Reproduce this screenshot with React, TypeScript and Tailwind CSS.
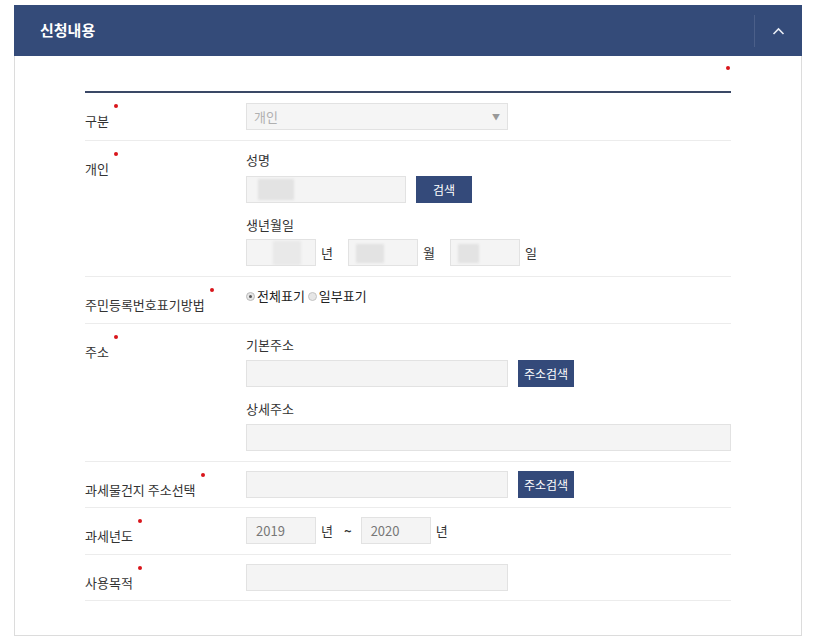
import React from 'react'

const font = { fontFamily: '"Noto Sans CJK KR", "Noto Sans", sans-serif' }

function Req({ children }: { children: React.ReactNode }) {
  return (
    <span className="relative inline-block text-[13px] leading-[20px] text-[#333]">
      {children}
      <span className="absolute -right-[9px] -top-[7px] h-[4px] w-[4px] rounded-full bg-[#d9151b]" />
    </span>
  )
}

function Input({ w, value, children }: { w: string; value?: string; children?: React.ReactNode }) {
  return (
    <div className={`relative h-[27px] ${w} overflow-hidden border border-[#e2e2e2] bg-[#f4f4f4] px-[9px] text-[13px] leading-[25px] text-[#777]`}>
      {value}
      {children}
    </div>
  )
}

function Btn({ children }: { children: React.ReactNode }) {
  return (
    <button className="ml-[10px] h-[27px] w-[56px] bg-[#344a7a] text-[12px] text-white">
      {children}
    </button>
  )
}

function Row({ label, children, className }: { label: string; children: React.ReactNode; className: string }) {
  return (
    <div className="flex border-b border-[#ececec]">
      <div className="w-[161px] shrink-0 pt-[14px]">
        <Req>{label}</Req>
      </div>
      <div className={`flex-1 ${className}`}>{children}</div>
    </div>
  )
}

function Sub({ children }: { children: React.ReactNode }) {
  return <div className="text-[13px] leading-[20px] text-[#333]">{children}</div>
}

function Unit({ children }: { children: React.ReactNode }) {
  return <span className="ml-[5px] text-[13px] leading-[20px] text-[#333]">{children}</span>
}

export default function App() {
  return (
    <div className="min-h-[644px] bg-white pl-[14px] pt-[5px]" style={font}>
      <div className="w-[788px]">
        <div className="flex h-[51px] items-center bg-[#344b79]">
          <h2 className="flex-1 pl-[26px] text-[15px] font-bold text-white">신청내용</h2>
          <div className="flex h-[32px] w-[48px] items-center justify-center border-l border-[#4b5f89]">
            <svg width="13" height="8" viewBox="0 0 13 8" fill="none">
              <polyline points="1.5,7 6.5,2 11.5,7" stroke="#e8ecf4" strokeWidth="1.6" />
            </svg>
          </div>
        </div>
        <div className="border border-t-0 border-[#dcdcdc] px-[70px] pb-[34px]">
          <div className="flex h-[35px] justify-end pr-[1px] pt-[10px]">
            <span className="h-[4px] w-[4px] rounded-full bg-[#d9151b]" />
          </div>
          <div className="h-[2px] bg-[#3a4866]" />

          <Row label="구분" className="pb-[10px] pt-[10px]">
            <div className="relative h-[27px] w-[262px] border border-[#e2e2e2] bg-[#f5f5f5] px-[7px] text-[13px] leading-[25px] text-[#b0b0b0]">
              개인
              <span className="absolute right-[7px] top-0 text-[8px] text-[#999]">▼</span>
            </div>
          </Row>

          <Row label="개인" className="pb-[10px] pt-[9px]">
            <Sub>성명</Sub>
            <div className="mt-[6px] flex">
              <Input w="w-[160px]">
                <div className="absolute left-[11px] top-[2px] h-[21px] w-[36px] bg-[#e3e3e3] blur-[1px]" />
              </Input>
              <Btn>검색</Btn>
            </div>
            <div className="mt-[12px]">
              <Sub>생년월일</Sub>
            </div>
            <div className="mt-[4px] flex items-center">
              <Input w="w-[70px]">
                <div className="absolute left-[26px] top-[1px] h-[24px] w-[28px] bg-[#e9e9e9] blur-[1px]" />
              </Input>
              <Unit>년</Unit>
              <div className="ml-[15px]">
                <Input w="w-[70px]">
                  <div className="absolute left-[7px] top-[4px] h-[19px] w-[28px] bg-[#e3e3e3] blur-[1px]" />
                </Input>
              </div>
              <Unit>월</Unit>
              <div className="ml-[15px]">
                <Input w="w-[70px]">
                  <div className="absolute left-[7px] top-[4px] h-[19px] w-[21px] bg-[#e3e3e3] blur-[1px]" />
                </Input>
              </div>
              <Unit>일</Unit>
            </div>
          </Row>

          <Row label="주민등록번호표기방법" className="pb-[17px] pt-[9px]">
            <div className="flex items-center text-[13px] leading-[20px] text-[#222]">
              <span className="mr-[2px] flex h-[9px] w-[9px] items-center justify-center rounded-full border border-[#bbb] bg-[#e6e6e6]">
                <span className="h-[3px] w-[3px] rounded-full bg-[#555]" />
              </span>
              <span>전체표기</span>
              <span className="ml-[3px] mr-[2px] h-[9px] w-[9px] rounded-full border border-[#c4c4c4] bg-[#e6e6e6]" />
              <span>일부표기</span>
            </div>
          </Row>

          <Row label="주소" className="pb-[10px] pt-[11px]">
            <Sub>기본주소</Sub>
            <div className="mt-[5px] flex">
              <Input w="w-[262px]" />
              <Btn>주소검색</Btn>
            </div>
            <div className="mt-[12px]">
              <Sub>상세주소</Sub>
            </div>
            <div className="mt-[5px]">
              <Input w="w-full" />
            </div>
          </Row>

          <Row label="과세물건지 주소선택" className="pb-[9px] pt-[9px]">
            <div className="flex">
              <Input w="w-[262px]" />
              <Btn>주소검색</Btn>
            </div>
          </Row>

          <Row label="과세년도" className="pb-[10px] pt-[9px]">
            <div className="flex items-center">
              <Input w="w-[70px]" value="2019" />
              <Unit>년</Unit>
              <span className="ml-[11px] text-[13px] font-bold text-[#333]">~</span>
              <div className="ml-[9px]">
                <Input w="w-[70px]" value="2020" />
              </div>
              <Unit>년</Unit>
            </div>
          </Row>

          <Row label="사용목적" className="pb-[9px] pt-[9px]">
            <Input w="w-[262px]" />
          </Row>
        </div>
      </div>
    </div>
  )
}
